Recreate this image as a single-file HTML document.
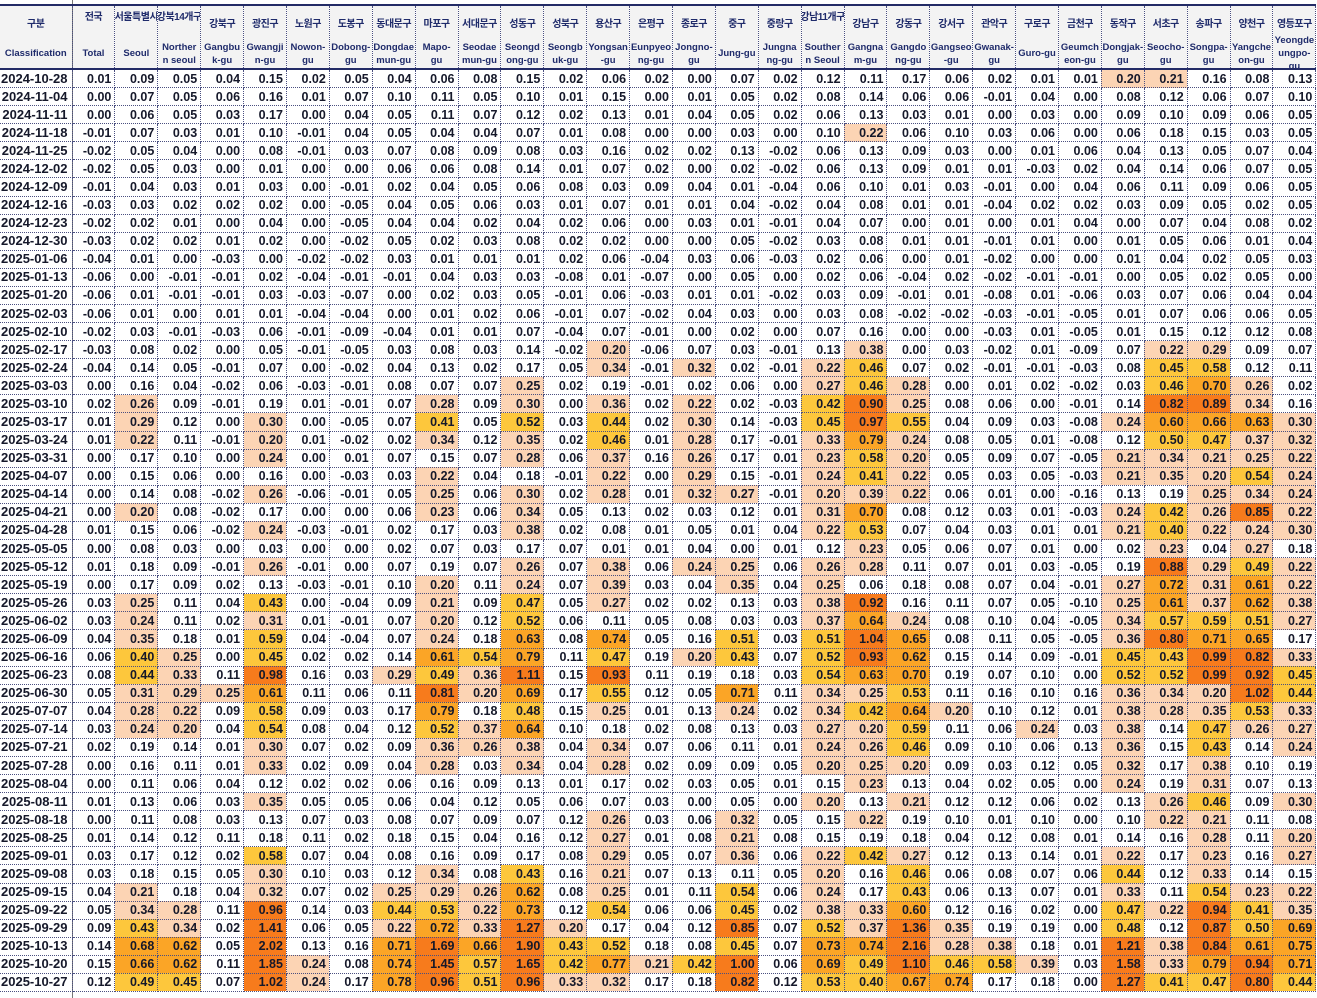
<!DOCTYPE html>
<html><head><meta charset="utf-8">
<style>
body{margin:0;width:1317px;height:998px;background:#fff;overflow:hidden;position:relative;font-family:"Liberation Sans","Noto Sans CJK KR",sans-serif}
.vl{position:absolute;left:72px;top:0;width:1px;height:998px;background:#777}
table{position:absolute;left:0;top:4px;border-collapse:collapse;table-layout:fixed;width:1316px}
thead th{background:#f3f3f3;color:#1f2b6b;font-weight:bold;border-left:1px dotted #4a4f80;border-right:1px dotted #4a4f80;border-top:2px solid #232b66;border-bottom:2px solid #232b66;padding:0;height:62px;vertical-align:top;overflow:hidden}
.k{height:33px;display:flex;align-items:center;justify-content:center;font-size:10px;white-space:nowrap;letter-spacing:-0.5px}
.k.t{align-items:flex-start;padding-top:2px;height:31px}
.e{height:29px;display:flex;align-items:center;justify-content:center;font-size:9.5px;line-height:13px;text-align:center}
tbody td,tbody th{height:17.08px;padding:0 3px 0 0;border:1px dotted #4a4f80;text-align:right;font-size:12.5px;font-weight:bold;color:#15182a;white-space:nowrap;line-height:16px}
tbody th{font-size:13px;padding-right:4px;border-left:none}
.p{background:#fcd4b4}.y{background:#fdc73c}.o{background:#fba526}.r{background:#f77b1c}
</style></head><body>
<div class="vl"></div>
<table>
<colgroup><col style="width:72px"><col span="29" style="width:42.9px"></colgroup>
<thead><tr>
<th style="border-left:none"><div class="k">구분</div><div class="e">Classification</div></th>
<th><div class="k t">전국</div><div class="e">Total</div></th>
<th><div class="k t">서울특별시</div><div class="e">Seoul</div></th>
<th><div class="k t">강북14개구</div><div class="e">Norther<br>n seoul</div></th>
<th><div class="k">강북구</div><div class="e">Gangbu<br>k-gu</div></th>
<th><div class="k">광진구</div><div class="e">Gwangji<br>n-gu</div></th>
<th><div class="k">노원구</div><div class="e">Nowon-<br>gu</div></th>
<th><div class="k">도봉구</div><div class="e">Dobong-<br>gu</div></th>
<th><div class="k">동대문구</div><div class="e">Dongdae<br>mun-gu</div></th>
<th><div class="k">마포구</div><div class="e">Mapo-<br>gu</div></th>
<th><div class="k">서대문구</div><div class="e">Seodae<br>mun-gu</div></th>
<th><div class="k">성동구</div><div class="e">Seongd<br>ong-gu</div></th>
<th><div class="k">성북구</div><div class="e">Seongb<br>uk-gu</div></th>
<th><div class="k">용산구</div><div class="e">Yongsan<br>-gu</div></th>
<th><div class="k">은평구</div><div class="e">Eunpyeo<br>ng-gu</div></th>
<th><div class="k">종로구</div><div class="e">Jongno-<br>gu</div></th>
<th><div class="k">중구</div><div class="e">Jung-gu</div></th>
<th><div class="k">중랑구</div><div class="e">Jungna<br>ng-gu</div></th>
<th><div class="k t">강남11개구</div><div class="e">Souther<br>n Seoul</div></th>
<th><div class="k">강남구</div><div class="e">Gangna<br>m-gu</div></th>
<th><div class="k">강동구</div><div class="e">Gangdo<br>ng-gu</div></th>
<th><div class="k">강서구</div><div class="e">Gangseo<br>-gu</div></th>
<th><div class="k">관악구</div><div class="e">Gwanak-<br>gu</div></th>
<th><div class="k">구로구</div><div class="e">Guro-gu</div></th>
<th><div class="k">금천구</div><div class="e">Geumch<br>eon-gu</div></th>
<th><div class="k">동작구</div><div class="e">Dongjak-<br>gu</div></th>
<th><div class="k">서초구</div><div class="e">Seocho-<br>gu</div></th>
<th><div class="k">송파구</div><div class="e">Songpa-<br>gu</div></th>
<th><div class="k">양천구</div><div class="e">Yangche<br>on-gu</div></th>
<th><div class="k">영등포구</div><div class="e">Yeongde<br>ungpo-<br>gu</div></th>
</tr></thead>
<tbody>
<tr><th>2024-10-28</th><td>0.01</td><td>0.09</td><td>0.05</td><td>0.04</td><td>0.15</td><td>0.02</td><td>0.05</td><td>0.04</td><td>0.06</td><td>0.08</td><td>0.15</td><td>0.02</td><td>0.06</td><td>0.02</td><td>0.00</td><td>0.07</td><td>0.02</td><td>0.12</td><td>0.11</td><td>0.17</td><td>0.06</td><td>0.02</td><td>0.01</td><td>0.01</td><td class="p">0.20</td><td class="p">0.21</td><td>0.16</td><td>0.08</td><td>0.13</td></tr>
<tr><th>2024-11-04</th><td>0.00</td><td>0.07</td><td>0.05</td><td>0.06</td><td>0.16</td><td>0.01</td><td>0.07</td><td>0.10</td><td>0.11</td><td>0.05</td><td>0.10</td><td>0.01</td><td>0.15</td><td>0.00</td><td>0.01</td><td>0.05</td><td>0.02</td><td>0.08</td><td>0.14</td><td>0.06</td><td>0.06</td><td>-0.01</td><td>0.04</td><td>0.00</td><td>0.08</td><td>0.12</td><td>0.06</td><td>0.07</td><td>0.10</td></tr>
<tr><th>2024-11-11</th><td>0.00</td><td>0.06</td><td>0.05</td><td>0.03</td><td>0.17</td><td>0.00</td><td>0.04</td><td>0.05</td><td>0.11</td><td>0.07</td><td>0.12</td><td>0.02</td><td>0.13</td><td>0.01</td><td>0.04</td><td>0.05</td><td>0.02</td><td>0.06</td><td>0.13</td><td>0.03</td><td>0.01</td><td>0.00</td><td>0.03</td><td>0.00</td><td>0.09</td><td>0.10</td><td>0.09</td><td>0.06</td><td>0.05</td></tr>
<tr><th>2024-11-18</th><td>-0.01</td><td>0.07</td><td>0.03</td><td>0.01</td><td>0.10</td><td>-0.01</td><td>0.04</td><td>0.05</td><td>0.04</td><td>0.04</td><td>0.07</td><td>0.01</td><td>0.08</td><td>0.00</td><td>0.00</td><td>0.03</td><td>0.00</td><td>0.10</td><td class="p">0.22</td><td>0.06</td><td>0.10</td><td>0.03</td><td>0.06</td><td>0.00</td><td>0.06</td><td>0.18</td><td>0.15</td><td>0.03</td><td>0.05</td></tr>
<tr><th>2024-11-25</th><td>-0.02</td><td>0.05</td><td>0.04</td><td>0.00</td><td>0.08</td><td>-0.01</td><td>0.03</td><td>0.07</td><td>0.08</td><td>0.09</td><td>0.08</td><td>0.03</td><td>0.16</td><td>0.02</td><td>0.02</td><td>0.13</td><td>-0.02</td><td>0.06</td><td>0.13</td><td>0.09</td><td>0.03</td><td>0.00</td><td>0.01</td><td>0.06</td><td>0.04</td><td>0.13</td><td>0.05</td><td>0.07</td><td>0.04</td></tr>
<tr><th>2024-12-02</th><td>-0.02</td><td>0.05</td><td>0.03</td><td>0.00</td><td>0.01</td><td>0.00</td><td>0.00</td><td>0.06</td><td>0.06</td><td>0.08</td><td>0.14</td><td>0.01</td><td>0.07</td><td>0.02</td><td>0.00</td><td>0.02</td><td>-0.02</td><td>0.06</td><td>0.13</td><td>0.09</td><td>0.01</td><td>0.01</td><td>-0.03</td><td>0.02</td><td>0.04</td><td>0.14</td><td>0.06</td><td>0.07</td><td>0.05</td></tr>
<tr><th>2024-12-09</th><td>-0.01</td><td>0.04</td><td>0.03</td><td>0.01</td><td>0.03</td><td>0.00</td><td>-0.01</td><td>0.02</td><td>0.04</td><td>0.05</td><td>0.06</td><td>0.08</td><td>0.03</td><td>0.09</td><td>0.04</td><td>0.01</td><td>-0.04</td><td>0.06</td><td>0.10</td><td>0.01</td><td>0.03</td><td>-0.01</td><td>0.00</td><td>0.04</td><td>0.06</td><td>0.11</td><td>0.09</td><td>0.06</td><td>0.05</td></tr>
<tr><th>2024-12-16</th><td>-0.03</td><td>0.03</td><td>0.02</td><td>0.02</td><td>0.02</td><td>0.00</td><td>-0.05</td><td>0.04</td><td>0.05</td><td>0.06</td><td>0.03</td><td>0.01</td><td>0.07</td><td>0.01</td><td>0.01</td><td>0.04</td><td>-0.02</td><td>0.04</td><td>0.08</td><td>0.01</td><td>0.01</td><td>-0.04</td><td>0.02</td><td>0.02</td><td>0.03</td><td>0.09</td><td>0.05</td><td>0.02</td><td>0.05</td></tr>
<tr><th>2024-12-23</th><td>-0.02</td><td>0.02</td><td>0.01</td><td>0.00</td><td>0.04</td><td>0.00</td><td>-0.05</td><td>0.04</td><td>0.04</td><td>0.02</td><td>0.04</td><td>0.02</td><td>0.06</td><td>0.00</td><td>0.03</td><td>0.01</td><td>-0.01</td><td>0.04</td><td>0.07</td><td>0.00</td><td>0.01</td><td>0.00</td><td>0.01</td><td>0.04</td><td>0.00</td><td>0.07</td><td>0.04</td><td>0.08</td><td>0.02</td></tr>
<tr><th>2024-12-30</th><td>-0.03</td><td>0.02</td><td>0.02</td><td>0.01</td><td>0.02</td><td>0.00</td><td>-0.02</td><td>0.05</td><td>0.02</td><td>0.03</td><td>0.08</td><td>0.02</td><td>0.02</td><td>0.00</td><td>0.00</td><td>0.05</td><td>-0.02</td><td>0.03</td><td>0.08</td><td>0.01</td><td>0.01</td><td>-0.01</td><td>0.01</td><td>0.00</td><td>0.01</td><td>0.05</td><td>0.06</td><td>0.01</td><td>0.04</td></tr>
<tr><th>2025-01-06</th><td>-0.04</td><td>0.01</td><td>0.00</td><td>-0.03</td><td>0.00</td><td>-0.02</td><td>-0.02</td><td>0.03</td><td>0.01</td><td>0.01</td><td>0.01</td><td>0.02</td><td>0.06</td><td>-0.04</td><td>0.03</td><td>0.06</td><td>-0.03</td><td>0.02</td><td>0.06</td><td>0.00</td><td>0.01</td><td>-0.02</td><td>0.00</td><td>0.00</td><td>0.01</td><td>0.04</td><td>0.02</td><td>0.05</td><td>0.03</td></tr>
<tr><th>2025-01-13</th><td>-0.06</td><td>0.00</td><td>-0.01</td><td>-0.01</td><td>0.02</td><td>-0.04</td><td>-0.01</td><td>-0.01</td><td>0.04</td><td>0.03</td><td>0.03</td><td>-0.08</td><td>0.01</td><td>-0.07</td><td>0.00</td><td>0.05</td><td>0.00</td><td>0.02</td><td>0.06</td><td>-0.04</td><td>0.02</td><td>-0.02</td><td>-0.01</td><td>-0.01</td><td>0.00</td><td>0.05</td><td>0.02</td><td>0.05</td><td>0.00</td></tr>
<tr><th>2025-01-20</th><td>-0.06</td><td>0.01</td><td>-0.01</td><td>-0.01</td><td>0.03</td><td>-0.03</td><td>-0.07</td><td>0.00</td><td>0.02</td><td>0.03</td><td>0.05</td><td>-0.01</td><td>0.06</td><td>-0.03</td><td>0.01</td><td>0.01</td><td>-0.02</td><td>0.03</td><td>0.09</td><td>-0.01</td><td>0.01</td><td>-0.08</td><td>0.01</td><td>-0.06</td><td>0.03</td><td>0.07</td><td>0.06</td><td>0.04</td><td>0.04</td></tr>
<tr><th>2025-02-03</th><td>-0.06</td><td>0.01</td><td>0.00</td><td>0.01</td><td>0.01</td><td>-0.04</td><td>-0.04</td><td>0.00</td><td>0.01</td><td>0.02</td><td>0.06</td><td>-0.01</td><td>0.07</td><td>-0.02</td><td>0.04</td><td>0.03</td><td>0.00</td><td>0.03</td><td>0.08</td><td>-0.02</td><td>-0.02</td><td>-0.03</td><td>-0.01</td><td>-0.05</td><td>0.01</td><td>0.07</td><td>0.06</td><td>0.06</td><td>0.05</td></tr>
<tr><th>2025-02-10</th><td>-0.02</td><td>0.03</td><td>-0.01</td><td>-0.03</td><td>0.06</td><td>-0.01</td><td>-0.09</td><td>-0.04</td><td>0.01</td><td>0.01</td><td>0.07</td><td>-0.04</td><td>0.07</td><td>-0.01</td><td>0.00</td><td>0.02</td><td>0.00</td><td>0.07</td><td>0.16</td><td>0.00</td><td>0.00</td><td>-0.03</td><td>0.01</td><td>-0.05</td><td>0.01</td><td>0.15</td><td>0.12</td><td>0.12</td><td>0.08</td></tr>
<tr><th>2025-02-17</th><td>-0.03</td><td>0.08</td><td>0.02</td><td>0.00</td><td>0.05</td><td>-0.01</td><td>-0.05</td><td>0.03</td><td>0.08</td><td>0.03</td><td>0.14</td><td>-0.02</td><td class="p">0.20</td><td>-0.06</td><td>0.07</td><td>0.03</td><td>-0.01</td><td>0.13</td><td class="p">0.38</td><td>0.00</td><td>0.03</td><td>-0.02</td><td>0.01</td><td>-0.09</td><td>0.07</td><td class="p">0.22</td><td class="p">0.29</td><td>0.09</td><td>0.07</td></tr>
<tr><th>2025-02-24</th><td>-0.04</td><td>0.14</td><td>0.05</td><td>-0.01</td><td>0.07</td><td>0.00</td><td>-0.02</td><td>0.04</td><td>0.13</td><td>0.02</td><td>0.17</td><td>0.05</td><td class="p">0.34</td><td>-0.01</td><td class="p">0.32</td><td>0.02</td><td>-0.01</td><td class="p">0.22</td><td class="y">0.46</td><td>0.07</td><td>0.02</td><td>-0.01</td><td>-0.01</td><td>-0.03</td><td>0.08</td><td class="y">0.45</td><td class="y">0.58</td><td>0.12</td><td>0.11</td></tr>
<tr><th>2025-03-03</th><td>0.00</td><td>0.16</td><td>0.04</td><td>-0.02</td><td>0.06</td><td>-0.03</td><td>-0.01</td><td>0.08</td><td>0.07</td><td>0.07</td><td class="p">0.25</td><td>0.02</td><td>0.19</td><td>-0.01</td><td>0.02</td><td>0.06</td><td>0.00</td><td class="p">0.27</td><td class="y">0.46</td><td class="p">0.28</td><td>0.00</td><td>0.01</td><td>0.02</td><td>-0.02</td><td>0.03</td><td class="y">0.46</td><td class="o">0.70</td><td class="p">0.26</td><td>0.02</td></tr>
<tr><th>2025-03-10</th><td>0.02</td><td class="p">0.26</td><td>0.09</td><td>-0.01</td><td>0.19</td><td>0.01</td><td>-0.01</td><td>0.07</td><td class="p">0.28</td><td>0.09</td><td class="p">0.30</td><td>0.00</td><td class="p">0.36</td><td>0.02</td><td class="p">0.22</td><td>0.02</td><td>-0.03</td><td class="y">0.42</td><td class="r">0.90</td><td class="p">0.25</td><td>0.08</td><td>0.06</td><td>0.00</td><td>-0.01</td><td>0.14</td><td class="r">0.82</td><td class="r">0.89</td><td class="p">0.34</td><td>0.16</td></tr>
<tr><th>2025-03-17</th><td>0.01</td><td class="p">0.29</td><td>0.12</td><td>0.00</td><td class="p">0.30</td><td>0.00</td><td>-0.05</td><td>0.07</td><td class="y">0.41</td><td>0.05</td><td class="y">0.52</td><td>0.03</td><td class="y">0.44</td><td>0.02</td><td class="p">0.30</td><td>0.14</td><td>-0.03</td><td class="y">0.45</td><td class="r">0.97</td><td class="y">0.55</td><td>0.04</td><td>0.09</td><td>0.03</td><td>-0.08</td><td class="p">0.24</td><td class="o">0.60</td><td class="o">0.66</td><td class="o">0.63</td><td class="p">0.30</td></tr>
<tr><th>2025-03-24</th><td>0.01</td><td class="p">0.22</td><td>0.11</td><td>-0.01</td><td class="p">0.20</td><td>0.01</td><td>-0.02</td><td>0.02</td><td class="p">0.34</td><td>0.12</td><td class="p">0.35</td><td>0.02</td><td class="y">0.46</td><td>0.01</td><td class="p">0.28</td><td>0.17</td><td>-0.01</td><td class="p">0.33</td><td class="o">0.79</td><td class="p">0.24</td><td>0.08</td><td>0.05</td><td>0.01</td><td>-0.08</td><td>0.12</td><td class="y">0.50</td><td class="y">0.47</td><td class="p">0.37</td><td class="p">0.32</td></tr>
<tr><th>2025-03-31</th><td>0.00</td><td>0.17</td><td>0.10</td><td>0.00</td><td class="p">0.24</td><td>0.00</td><td>0.01</td><td>0.07</td><td>0.15</td><td>0.07</td><td class="p">0.28</td><td>0.06</td><td class="p">0.37</td><td>0.16</td><td class="p">0.26</td><td>0.17</td><td>0.01</td><td class="p">0.23</td><td class="y">0.58</td><td class="p">0.20</td><td>0.05</td><td>0.09</td><td>0.07</td><td>-0.05</td><td class="p">0.21</td><td class="p">0.34</td><td class="p">0.21</td><td class="p">0.25</td><td class="p">0.22</td></tr>
<tr><th>2025-04-07</th><td>0.00</td><td>0.15</td><td>0.06</td><td>0.00</td><td>0.16</td><td>0.00</td><td>-0.03</td><td>0.03</td><td class="p">0.22</td><td>0.04</td><td>0.18</td><td>-0.01</td><td class="p">0.22</td><td>0.00</td><td class="p">0.29</td><td>0.15</td><td>-0.01</td><td class="p">0.24</td><td class="y">0.41</td><td class="p">0.22</td><td>0.05</td><td>0.03</td><td>0.05</td><td>-0.03</td><td class="p">0.21</td><td class="p">0.35</td><td class="p">0.20</td><td class="y">0.54</td><td class="p">0.24</td></tr>
<tr><th>2025-04-14</th><td>0.00</td><td>0.14</td><td>0.08</td><td>-0.02</td><td class="p">0.26</td><td>-0.06</td><td>-0.01</td><td>0.05</td><td class="p">0.25</td><td>0.06</td><td class="p">0.30</td><td>0.02</td><td class="p">0.28</td><td>0.01</td><td class="p">0.32</td><td class="p">0.27</td><td>-0.01</td><td class="p">0.20</td><td class="p">0.39</td><td class="p">0.22</td><td>0.06</td><td>0.01</td><td>0.00</td><td>-0.16</td><td>0.13</td><td>0.19</td><td class="p">0.25</td><td class="p">0.34</td><td class="p">0.24</td></tr>
<tr><th>2025-04-21</th><td>0.00</td><td class="p">0.20</td><td>0.08</td><td>-0.02</td><td>0.17</td><td>0.00</td><td>0.00</td><td>0.06</td><td class="p">0.23</td><td>0.06</td><td class="p">0.34</td><td>0.05</td><td>0.13</td><td>0.02</td><td>0.03</td><td>0.12</td><td>0.01</td><td class="p">0.31</td><td class="o">0.70</td><td>0.08</td><td>0.12</td><td>0.03</td><td>0.01</td><td>-0.03</td><td class="p">0.24</td><td class="y">0.42</td><td class="p">0.26</td><td class="r">0.85</td><td class="p">0.22</td></tr>
<tr><th>2025-04-28</th><td>0.01</td><td>0.15</td><td>0.06</td><td>-0.02</td><td class="p">0.24</td><td>-0.03</td><td>-0.01</td><td>0.02</td><td>0.17</td><td>0.03</td><td class="p">0.38</td><td>0.02</td><td>0.08</td><td>0.01</td><td>0.05</td><td>0.01</td><td>0.04</td><td class="p">0.22</td><td class="y">0.53</td><td>0.07</td><td>0.04</td><td>0.03</td><td>0.01</td><td>0.01</td><td class="p">0.21</td><td class="y">0.40</td><td class="p">0.22</td><td class="p">0.24</td><td class="p">0.30</td></tr>
<tr><th>2025-05-05</th><td>0.00</td><td>0.08</td><td>0.03</td><td>0.00</td><td>0.03</td><td>0.00</td><td>0.00</td><td>0.02</td><td>0.07</td><td>0.03</td><td>0.17</td><td>0.07</td><td>0.01</td><td>0.01</td><td>0.04</td><td>0.00</td><td>0.01</td><td>0.12</td><td class="p">0.23</td><td>0.05</td><td>0.06</td><td>0.07</td><td>0.01</td><td>0.00</td><td>0.02</td><td class="p">0.23</td><td>0.04</td><td class="p">0.27</td><td>0.18</td></tr>
<tr><th>2025-05-12</th><td>0.01</td><td>0.18</td><td>0.09</td><td>-0.01</td><td class="p">0.26</td><td>-0.01</td><td>0.00</td><td>0.07</td><td>0.19</td><td>0.07</td><td class="p">0.26</td><td>0.07</td><td class="p">0.38</td><td>0.06</td><td class="p">0.24</td><td class="p">0.25</td><td>0.06</td><td class="p">0.26</td><td class="p">0.28</td><td>0.11</td><td>0.07</td><td>0.01</td><td>0.03</td><td>-0.05</td><td>0.19</td><td class="r">0.88</td><td class="p">0.29</td><td class="y">0.49</td><td class="p">0.22</td></tr>
<tr><th>2025-05-19</th><td>0.00</td><td>0.17</td><td>0.09</td><td>0.02</td><td>0.13</td><td>-0.03</td><td>-0.01</td><td>0.10</td><td class="p">0.20</td><td>0.11</td><td class="p">0.24</td><td>0.07</td><td class="p">0.39</td><td>0.03</td><td>0.04</td><td class="p">0.35</td><td>0.04</td><td class="p">0.25</td><td>0.06</td><td>0.18</td><td>0.08</td><td>0.07</td><td>0.04</td><td>-0.01</td><td class="p">0.27</td><td class="o">0.72</td><td class="p">0.31</td><td class="o">0.61</td><td class="p">0.22</td></tr>
<tr><th>2025-05-26</th><td>0.03</td><td class="p">0.25</td><td>0.11</td><td>0.04</td><td class="y">0.43</td><td>0.00</td><td>-0.04</td><td>0.09</td><td class="p">0.21</td><td>0.09</td><td class="y">0.47</td><td>0.05</td><td class="p">0.27</td><td>0.02</td><td>0.02</td><td>0.13</td><td>0.03</td><td class="p">0.38</td><td class="r">0.92</td><td>0.16</td><td>0.11</td><td>0.07</td><td>0.05</td><td>-0.10</td><td class="p">0.25</td><td class="o">0.61</td><td class="p">0.37</td><td class="o">0.62</td><td class="p">0.38</td></tr>
<tr><th>2025-06-02</th><td>0.03</td><td class="p">0.24</td><td>0.11</td><td>0.02</td><td class="p">0.31</td><td>0.01</td><td>-0.01</td><td>0.07</td><td class="p">0.20</td><td>0.12</td><td class="y">0.52</td><td>0.06</td><td>0.11</td><td>0.05</td><td>0.08</td><td>0.03</td><td>0.03</td><td class="p">0.37</td><td class="o">0.64</td><td class="p">0.24</td><td>0.08</td><td>0.10</td><td>0.04</td><td>-0.05</td><td class="p">0.34</td><td class="y">0.57</td><td class="y">0.59</td><td class="y">0.51</td><td class="p">0.27</td></tr>
<tr><th>2025-06-09</th><td>0.04</td><td class="p">0.35</td><td>0.18</td><td>0.01</td><td class="y">0.59</td><td>0.04</td><td>-0.04</td><td>0.07</td><td class="p">0.24</td><td>0.18</td><td class="o">0.63</td><td>0.08</td><td class="o">0.74</td><td>0.05</td><td>0.16</td><td class="y">0.51</td><td>0.03</td><td class="y">0.51</td><td class="r">1.04</td><td class="o">0.65</td><td>0.08</td><td>0.11</td><td>0.05</td><td>-0.05</td><td class="p">0.36</td><td class="r">0.80</td><td class="o">0.71</td><td class="o">0.65</td><td>0.17</td></tr>
<tr><th>2025-06-16</th><td>0.06</td><td class="y">0.40</td><td class="p">0.25</td><td>0.00</td><td class="y">0.45</td><td>0.02</td><td>0.02</td><td>0.14</td><td class="o">0.61</td><td class="y">0.54</td><td class="o">0.79</td><td>0.11</td><td class="y">0.47</td><td>0.19</td><td class="p">0.20</td><td class="y">0.43</td><td>0.07</td><td class="y">0.52</td><td class="r">0.93</td><td class="o">0.62</td><td>0.15</td><td>0.14</td><td>0.09</td><td>-0.01</td><td class="y">0.45</td><td class="y">0.43</td><td class="r">0.99</td><td class="r">0.82</td><td class="p">0.33</td></tr>
<tr><th>2025-06-23</th><td>0.08</td><td class="y">0.44</td><td class="p">0.33</td><td>0.11</td><td class="r">0.98</td><td>0.16</td><td>0.03</td><td class="p">0.29</td><td class="y">0.49</td><td class="p">0.36</td><td class="r">1.11</td><td>0.15</td><td class="r">0.93</td><td>0.11</td><td>0.19</td><td>0.18</td><td>0.03</td><td class="y">0.54</td><td class="o">0.63</td><td class="o">0.70</td><td>0.19</td><td>0.07</td><td>0.10</td><td>0.00</td><td class="y">0.52</td><td class="y">0.52</td><td class="r">0.99</td><td class="r">0.92</td><td class="y">0.45</td></tr>
<tr><th>2025-06-30</th><td>0.05</td><td class="p">0.31</td><td class="p">0.29</td><td class="p">0.25</td><td class="o">0.61</td><td>0.11</td><td>0.06</td><td>0.11</td><td class="r">0.81</td><td class="p">0.20</td><td class="o">0.69</td><td>0.17</td><td class="y">0.55</td><td>0.12</td><td>0.05</td><td class="o">0.71</td><td>0.11</td><td class="p">0.34</td><td class="p">0.25</td><td class="y">0.53</td><td>0.11</td><td>0.16</td><td>0.10</td><td>0.16</td><td class="p">0.36</td><td class="p">0.34</td><td class="p">0.20</td><td class="r">1.02</td><td class="y">0.44</td></tr>
<tr><th>2025-07-07</th><td>0.04</td><td class="p">0.28</td><td class="p">0.22</td><td>0.09</td><td class="y">0.58</td><td>0.09</td><td>0.03</td><td>0.17</td><td class="o">0.79</td><td>0.18</td><td class="y">0.48</td><td>0.15</td><td class="p">0.25</td><td>0.01</td><td>0.13</td><td class="p">0.24</td><td>0.02</td><td class="p">0.34</td><td class="y">0.42</td><td class="o">0.64</td><td class="p">0.20</td><td>0.10</td><td>0.12</td><td>0.01</td><td class="p">0.38</td><td class="p">0.28</td><td class="p">0.35</td><td class="y">0.53</td><td class="p">0.33</td></tr>
<tr><th>2025-07-14</th><td>0.03</td><td class="p">0.24</td><td class="p">0.20</td><td>0.04</td><td class="y">0.54</td><td>0.08</td><td>0.04</td><td>0.12</td><td class="y">0.52</td><td class="p">0.37</td><td class="o">0.64</td><td>0.10</td><td>0.18</td><td>0.02</td><td>0.08</td><td>0.13</td><td>0.03</td><td class="p">0.27</td><td class="p">0.20</td><td class="y">0.59</td><td>0.11</td><td>0.06</td><td class="p">0.24</td><td>0.03</td><td class="p">0.38</td><td>0.14</td><td class="y">0.47</td><td class="p">0.26</td><td class="p">0.27</td></tr>
<tr><th>2025-07-21</th><td>0.02</td><td>0.19</td><td>0.14</td><td>0.01</td><td class="p">0.30</td><td>0.07</td><td>0.02</td><td>0.09</td><td class="p">0.36</td><td class="p">0.26</td><td class="p">0.38</td><td>0.04</td><td class="p">0.34</td><td>0.07</td><td>0.06</td><td>0.11</td><td>0.01</td><td class="p">0.24</td><td class="p">0.26</td><td class="y">0.46</td><td>0.09</td><td>0.10</td><td>0.06</td><td>0.13</td><td class="p">0.36</td><td>0.15</td><td class="y">0.43</td><td>0.14</td><td class="p">0.24</td></tr>
<tr><th>2025-07-28</th><td>0.00</td><td>0.16</td><td>0.11</td><td>0.01</td><td class="p">0.33</td><td>0.02</td><td>0.09</td><td>0.04</td><td class="p">0.28</td><td>0.03</td><td class="p">0.34</td><td>0.04</td><td class="p">0.28</td><td>0.02</td><td>0.09</td><td>0.09</td><td>0.05</td><td class="p">0.20</td><td class="p">0.25</td><td class="p">0.20</td><td>0.09</td><td>0.03</td><td>0.12</td><td>0.05</td><td class="p">0.32</td><td>0.17</td><td class="p">0.38</td><td>0.10</td><td>0.19</td></tr>
<tr><th>2025-08-04</th><td>0.00</td><td>0.11</td><td>0.06</td><td>0.04</td><td>0.12</td><td>0.02</td><td>0.02</td><td>0.06</td><td>0.16</td><td>0.09</td><td>0.13</td><td>0.01</td><td>0.17</td><td>0.02</td><td>0.03</td><td>0.05</td><td>0.01</td><td>0.15</td><td class="p">0.23</td><td>0.13</td><td>0.04</td><td>0.02</td><td>0.05</td><td>0.00</td><td class="p">0.24</td><td>0.19</td><td class="p">0.31</td><td>0.07</td><td>0.13</td></tr>
<tr><th>2025-08-11</th><td>0.01</td><td>0.13</td><td>0.06</td><td>0.03</td><td class="p">0.35</td><td>0.05</td><td>0.05</td><td>0.06</td><td>0.04</td><td>0.12</td><td>0.05</td><td>0.06</td><td>0.07</td><td>0.03</td><td>0.00</td><td>0.05</td><td>0.00</td><td class="p">0.20</td><td>0.13</td><td class="p">0.21</td><td>0.12</td><td>0.12</td><td>0.06</td><td>0.02</td><td>0.13</td><td class="p">0.26</td><td class="y">0.46</td><td>0.09</td><td class="p">0.30</td></tr>
<tr><th>2025-08-18</th><td>0.00</td><td>0.11</td><td>0.08</td><td>0.03</td><td>0.13</td><td>0.07</td><td>0.03</td><td>0.08</td><td>0.07</td><td>0.09</td><td>0.07</td><td>0.12</td><td class="p">0.26</td><td>0.03</td><td>0.06</td><td class="p">0.32</td><td>0.05</td><td>0.15</td><td class="p">0.22</td><td>0.19</td><td>0.10</td><td>0.01</td><td>0.10</td><td>0.00</td><td>0.10</td><td class="p">0.22</td><td class="p">0.21</td><td>0.11</td><td>0.08</td></tr>
<tr><th>2025-08-25</th><td>0.01</td><td>0.14</td><td>0.12</td><td>0.11</td><td>0.18</td><td>0.11</td><td>0.02</td><td>0.18</td><td>0.15</td><td>0.04</td><td>0.16</td><td>0.12</td><td class="p">0.27</td><td>0.01</td><td>0.08</td><td class="p">0.21</td><td>0.08</td><td>0.15</td><td>0.19</td><td>0.18</td><td>0.04</td><td>0.12</td><td>0.08</td><td>0.01</td><td>0.14</td><td>0.16</td><td class="p">0.28</td><td>0.11</td><td class="p">0.20</td></tr>
<tr><th>2025-09-01</th><td>0.03</td><td>0.17</td><td>0.12</td><td>0.02</td><td class="y">0.58</td><td>0.07</td><td>0.04</td><td>0.08</td><td>0.16</td><td>0.09</td><td>0.17</td><td>0.08</td><td class="p">0.29</td><td>0.05</td><td>0.07</td><td class="p">0.36</td><td>0.06</td><td class="p">0.22</td><td class="y">0.42</td><td class="p">0.27</td><td>0.12</td><td>0.13</td><td>0.14</td><td>0.01</td><td class="p">0.22</td><td>0.17</td><td class="p">0.23</td><td>0.16</td><td class="p">0.27</td></tr>
<tr><th>2025-09-08</th><td>0.03</td><td>0.18</td><td>0.15</td><td>0.05</td><td class="p">0.30</td><td>0.10</td><td>0.03</td><td>0.12</td><td class="p">0.34</td><td>0.08</td><td class="y">0.43</td><td>0.16</td><td class="p">0.21</td><td>0.07</td><td>0.13</td><td>0.11</td><td>0.05</td><td class="p">0.20</td><td>0.16</td><td class="y">0.46</td><td>0.06</td><td>0.08</td><td>0.07</td><td>0.06</td><td class="y">0.44</td><td>0.12</td><td class="p">0.33</td><td>0.14</td><td>0.15</td></tr>
<tr><th>2025-09-15</th><td>0.04</td><td class="p">0.21</td><td>0.18</td><td>0.04</td><td class="p">0.32</td><td>0.07</td><td>0.02</td><td class="p">0.25</td><td class="p">0.29</td><td class="p">0.26</td><td class="o">0.62</td><td>0.08</td><td class="p">0.25</td><td>0.01</td><td>0.11</td><td class="y">0.54</td><td>0.06</td><td class="p">0.24</td><td>0.17</td><td class="y">0.43</td><td>0.06</td><td>0.13</td><td>0.07</td><td>0.01</td><td class="p">0.33</td><td>0.11</td><td class="y">0.54</td><td class="p">0.23</td><td class="p">0.22</td></tr>
<tr><th>2025-09-22</th><td>0.05</td><td class="p">0.34</td><td class="p">0.28</td><td>0.11</td><td class="r">0.96</td><td>0.14</td><td>0.03</td><td class="y">0.44</td><td class="y">0.53</td><td class="p">0.22</td><td class="o">0.73</td><td>0.12</td><td class="y">0.54</td><td>0.06</td><td>0.06</td><td class="y">0.45</td><td>0.02</td><td class="p">0.38</td><td class="p">0.33</td><td class="o">0.60</td><td>0.12</td><td>0.16</td><td>0.02</td><td>0.00</td><td class="y">0.47</td><td class="p">0.22</td><td class="r">0.94</td><td class="y">0.41</td><td class="p">0.35</td></tr>
<tr><th>2025-09-29</th><td>0.09</td><td class="y">0.43</td><td class="p">0.34</td><td>0.02</td><td class="r">1.41</td><td>0.06</td><td>0.05</td><td class="p">0.22</td><td class="o">0.72</td><td class="p">0.33</td><td class="r">1.27</td><td class="p">0.20</td><td>0.17</td><td>0.04</td><td>0.12</td><td class="r">0.85</td><td>0.07</td><td class="y">0.52</td><td class="p">0.37</td><td class="r">1.36</td><td class="p">0.35</td><td>0.19</td><td>0.19</td><td>0.00</td><td class="y">0.48</td><td>0.12</td><td class="r">0.87</td><td class="y">0.50</td><td class="o">0.69</td></tr>
<tr><th>2025-10-13</th><td>0.14</td><td class="o">0.68</td><td class="o">0.62</td><td>0.05</td><td class="r">2.02</td><td>0.13</td><td>0.16</td><td class="o">0.71</td><td class="r">1.69</td><td class="o">0.66</td><td class="r">1.90</td><td class="y">0.43</td><td class="y">0.52</td><td>0.18</td><td>0.08</td><td class="y">0.45</td><td>0.07</td><td class="o">0.73</td><td class="o">0.74</td><td class="r">2.16</td><td class="p">0.28</td><td class="p">0.38</td><td>0.18</td><td>0.01</td><td class="r">1.21</td><td class="p">0.38</td><td class="r">0.84</td><td class="o">0.61</td><td class="o">0.75</td></tr>
<tr><th>2025-10-20</th><td>0.15</td><td class="o">0.66</td><td class="o">0.62</td><td>0.11</td><td class="r">1.85</td><td class="p">0.24</td><td>0.08</td><td class="o">0.74</td><td class="r">1.45</td><td class="y">0.57</td><td class="r">1.65</td><td class="y">0.42</td><td class="o">0.77</td><td class="p">0.21</td><td class="y">0.42</td><td class="r">1.00</td><td>0.06</td><td class="o">0.69</td><td class="y">0.49</td><td class="r">1.10</td><td class="y">0.46</td><td class="y">0.58</td><td class="p">0.39</td><td>0.03</td><td class="r">1.58</td><td class="p">0.33</td><td class="o">0.79</td><td class="r">0.94</td><td class="o">0.71</td></tr>
<tr><th>2025-10-27</th><td>0.12</td><td class="y">0.49</td><td class="y">0.45</td><td>0.07</td><td class="r">1.02</td><td class="p">0.24</td><td>0.17</td><td class="o">0.78</td><td class="r">0.96</td><td class="y">0.51</td><td class="r">0.96</td><td class="p">0.33</td><td class="p">0.32</td><td>0.17</td><td>0.18</td><td class="r">0.82</td><td>0.12</td><td class="y">0.53</td><td class="y">0.40</td><td class="o">0.67</td><td class="o">0.74</td><td>0.17</td><td>0.18</td><td>0.00</td><td class="r">1.27</td><td class="y">0.41</td><td class="y">0.47</td><td class="r">0.80</td><td class="y">0.44</td></tr>
</tbody></table>
</body></html>
